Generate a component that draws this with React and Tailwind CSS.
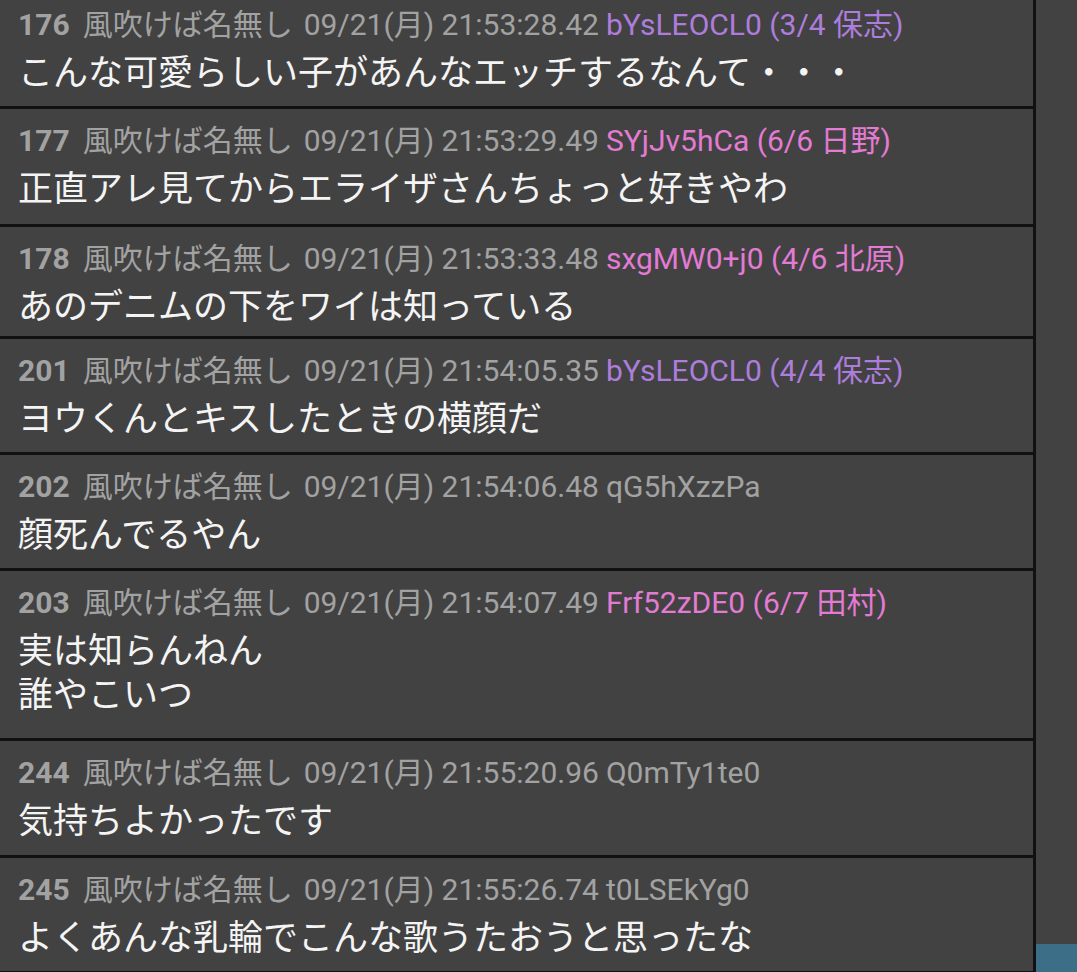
const posts = [
  { no: 176, date: "09/21(月) 21:53:28.42", id: "bYsLEOCL0 (3/4 保志)", color: "purple", pb: "pb-[10px]", body: ["こんな可愛らしい子があんなエッチするなんて・・・"] },
  { no: 177, date: "09/21(月) 21:53:29.49", id: "SYjJv5hCa (6/6 日野)", color: "pink", pb: "pb-[12px]", body: ["正直アレ見てからエライザさんちょっと好きやわ"] },
  { no: 178, date: "09/21(月) 21:53:33.48", id: "sxgMW0+j0 (4/6 北原)", color: "pink", pb: "pb-[6px]", body: ["あのデニムの下をワイは知っている"] },
  { no: 201, date: "09/21(月) 21:54:05.35", id: "bYsLEOCL0 (4/4 保志)", color: "purple", pb: "pb-[10px]", body: ["ヨウくんとキスしたときの横顔だ"] },
  { no: 202, date: "09/21(月) 21:54:06.48", id: "qG5hXzzPa", color: "gray", pb: "pb-[10px]", body: ["顔死んでるやん"] },
  { no: 203, date: "09/21(月) 21:54:07.49", id: "Frf52zDE0 (6/7 田村)", color: "pink", pb: "pb-[20px]", body: ["実は知らんねん", "誰やこいつ"] },
  { no: 244, date: "09/21(月) 21:55:20.96", id: "Q0mTy1te0", color: "gray", pb: "pb-[11px]", body: ["気持ちよかったです"] },
  { no: 245, date: "09/21(月) 21:55:26.74", id: "t0LSEkYg0", color: "gray", pb: "pb-[10px]", body: ["よくあんな乳輪でこんな歌うたおうと思ったな"] },
];

const idColor = {
  purple: "text-[#ad7ddc]",
  pink: "text-[#e27bd3]",
  gray: "text-[#a2a2a2]",
};

function Post({ post, first }) {
  return (
    <div
      className={
        "border-b-[3px] border-[#111111] pl-[18px] pt-[14px] " +
        (first ? "mt-[-7px] " : "") +
        post.pb
      }
    >
      <div className="flex items-center h-[36px] text-[30px] leading-[36px] text-[#a2a2a2] whitespace-nowrap">
        <span className="font-bold mr-[13px]">{post.no}</span>
        <span className="mr-[11px]">風吹けば名無し</span>
        <span className="mr-[7px]">{post.date}</span>
        <span className={idColor[post.color]}>{post.id}</span>
      </div>
      <div className="mt-[9px] text-[35px] leading-[44px] text-[#f4f4f4]">
        {post.body.map((line, i) => (
          <div key={i}>{line}</div>
        ))}
      </div>
    </div>
  );
}

export default function App() {
  return (
    <div
      className="flex h-[972px] w-[1077px] overflow-hidden bg-[#424242]"
      style={{ fontFamily: "Roboto, 'Noto Sans CJK JP', sans-serif" }}
    >
      <div className="w-[1036px] shrink-0 border-r-[3px] border-[#111111] overflow-hidden">
        {posts.map((p, i) => (
          <Post key={p.no} post={p} first={i === 0} />
        ))}
      </div>
      <div className="flex-1 flex flex-col justify-end">
        <div className="h-[28px] bg-[#3c6f87]" />
      </div>
    </div>
  );
}
